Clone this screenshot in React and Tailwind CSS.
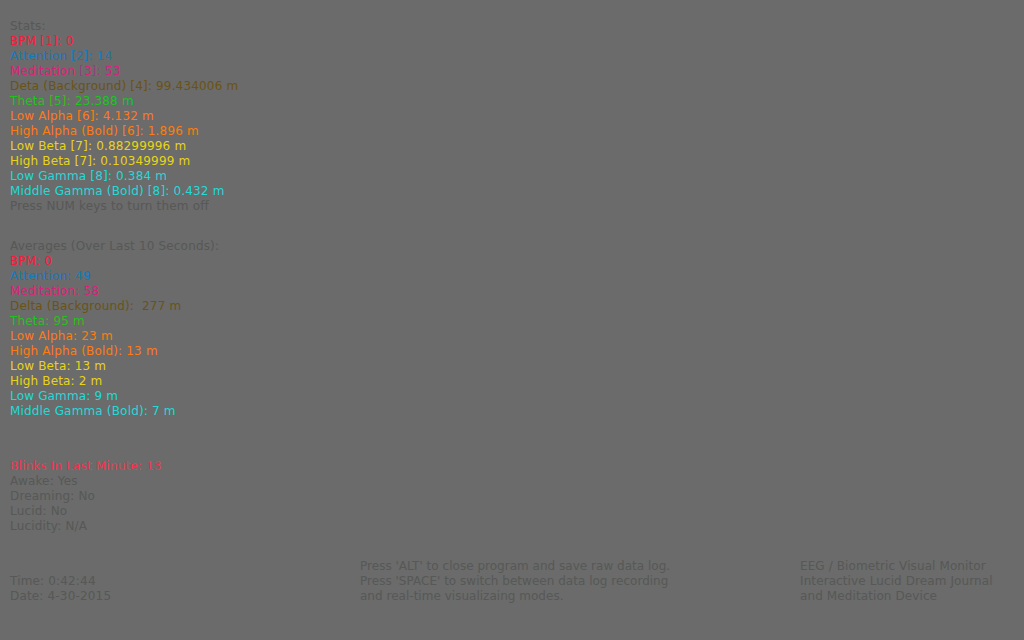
import React from 'react';

const RED = 'text-[#f01e3c]';
const BLUE = 'text-[#0f7cc0]';
const PINK = 'text-[#dc1f7c]';
const BROWN = 'text-[#6b5315]';
const GREEN = 'text-[#1fc21f]';
const ORANGE = 'text-[#ff7b12]';
const YELLOW = 'text-[#e8d415]';
const CYAN = 'text-[#26d8d8]';
const DIM = 'text-[#575857]';

const stats = [
    { text: 'Stats:', c: DIM },
    { text: 'BPM [1]: 0', c: RED },
    { text: 'Attention [2]: 14', c: BLUE },
    { text: 'Meditation [3]: 53', c: PINK },
    { text: 'Deta (Background) [4]: 99.434006 m', c: BROWN },
    { text: 'Theta [5]: 23.388 m', c: GREEN },
    { text: 'Low Alpha [6]: 4.132 m', c: ORANGE },
    { text: 'High Alpha (Bold) [6]: 1.896 m', c: ORANGE },
    { text: 'Low Beta [7]: 0.88299996 m', c: YELLOW },
    { text: 'High Beta [7]: 0.10349999 m', c: YELLOW },
    { text: 'Low Gamma [8]: 0.384 m', c: CYAN },
    { text: 'Middle Gamma (Bold) [8]: 0.432 m', c: CYAN },
    { text: 'Press NUM keys to turn them off', c: DIM },
];

const averages = [
    { text: 'Averages (Over Last 10 Seconds):', c: DIM },
    { text: 'BPM: 0', c: RED },
    { text: 'Attention: 49', c: BLUE },
    { text: 'Meditation: 58', c: PINK },
    { text: 'Delta (Background):  277 m', c: BROWN },
    { text: 'Theta: 95 m', c: GREEN },
    { text: 'Low Alpha: 23 m', c: ORANGE },
    { text: 'High Alpha (Bold): 13 m', c: ORANGE },
    { text: 'Low Beta: 13 m', c: YELLOW },
    { text: 'High Beta: 2 m', c: YELLOW },
    { text: 'Low Gamma: 9 m', c: CYAN },
    { text: 'Middle Gamma (Bold): 7 m', c: CYAN },
];

const status = [
    { text: 'Blinks In Last Minute: 13', c: 'text-[#f23350]' },
    { text: 'Awake: Yes', c: DIM },
    { text: 'Dreaming: No', c: DIM },
    { text: 'Lucid: No', c: DIM },
    { text: 'Lucidity: N/A', c: DIM },
];

const Block = ({ lines, className = '' }) => (
    <div className={className}>
        {lines.map((l, i) => (
            <div key={i} className={`${l.c} whitespace-pre`}>{l.text}</div>
        ))}
    </div>
);

const App = () => {
    return (
        <div
            className="w-[1024px] h-[640px] bg-[#6a6b6a] overflow-hidden px-[10px] pt-[19px] text-[12px] leading-[15px] tracking-[0.17px]"
            style={{ fontFamily: '"DejaVu Sans", Verdana, sans-serif' }}
        >
            <Block lines={stats} />
            <Block lines={averages} className="mt-[25px]" />
            <Block lines={status} className="mt-[40px]" />

            <div className={`flex items-end mt-[25px] ${DIM}`}>
                <div className="w-[350px]">
                    <div>Time: 0:42:44</div>
                    <div>Date: 4-30-2015</div>
                </div>
                <div className="w-[440px] tracking-[0.02px]">
                    <div>Press 'ALT' to close program and save raw data log.</div>
                    <div>Press 'SPACE' to switch between data log recording</div>
                    <div>and real-time visualizaing modes.</div>
                </div>
                <div className="tracking-[0.1px]">
                    <div>EEG / Biometric Visual Monitor</div>
                    <div>Interactive Lucid Dream Journal</div>
                    <div>and Meditation Device</div>
                </div>
            </div>
        </div>
    );
};

export default App;
